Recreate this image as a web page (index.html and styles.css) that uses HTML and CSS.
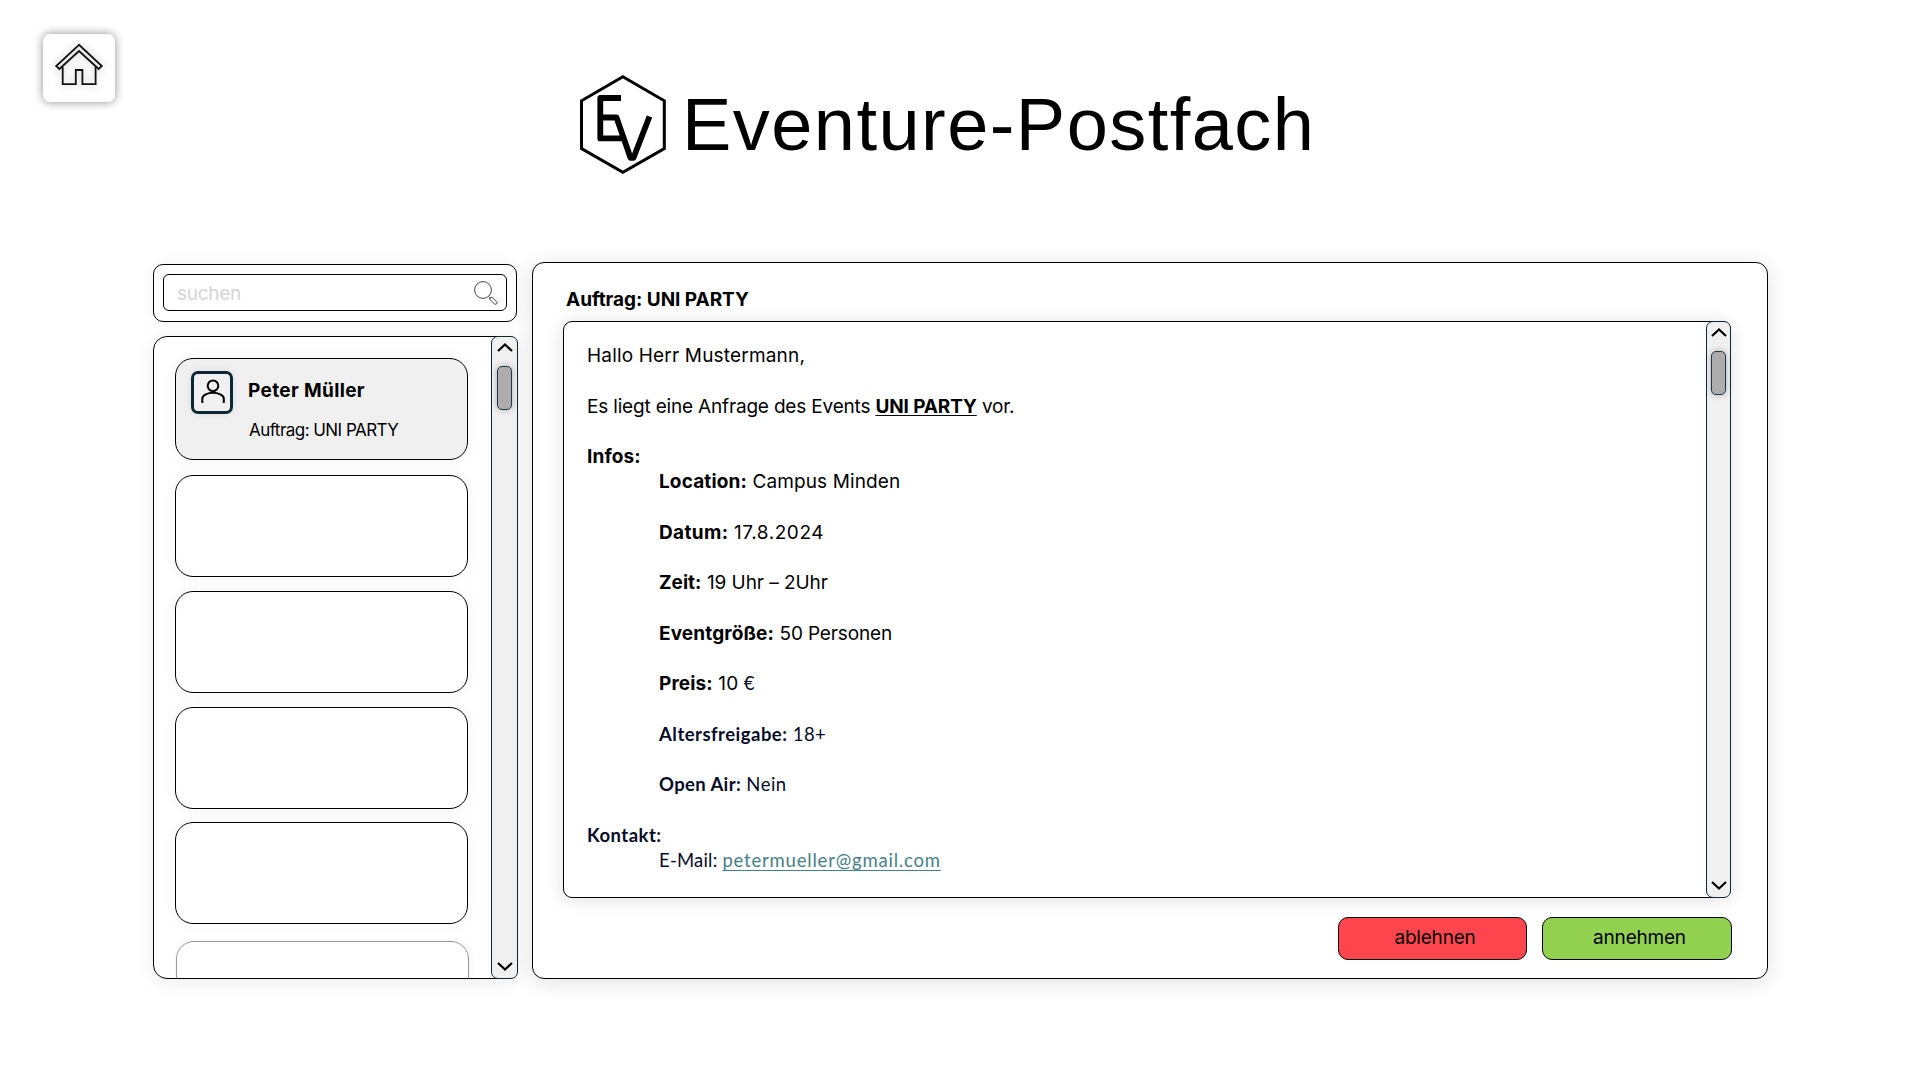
FILE: index.html
```html
<!DOCTYPE html>
<html lang="de">
<head>
<meta charset="utf-8">
<title>Eventure-Postfach</title>
<link rel="stylesheet" href="styles.css">
</head>
<body>
<header class="header">
  <a class="home" href="#" aria-label="Startseite">
    <svg class="home-icon" width="72" height="68" viewBox="0 0 72 68">
      <path d="M36 10.8 13.2 32 16.4 35 36 17 55.6 35 58.8 32Z"/>
      <path d="M19.7 33V50.2H32.8V36H39.4V50.2H52.6V33"/>
    </svg>
  </a>
  <div class="brand">
    <svg class="logo" width="88" height="102" viewBox="0 0 88 102">
      <path class="logo-frame" d="M43.900 2.800 85.300 26.800V74.600L43.900 98.200 2.500 74.600V26.800Z"/>
      <path class="logo-mark" d="M42 24H21.300V64.400H43.500"/>
      <path class="logo-mark" d="M21.300 43.500H37.500L51.500 83.800H54.500L70.500 42.500"/>
    </svg>
    <h1 class="title">Eventure-Postfach</h1>
  </div>
</header>

<main class="mailbox">
  <aside class="sidebar">
    <div class="search">
      <div class="search-field">
        <span class="search-hint">suchen</span>
        <svg class="search-icon" width="26" height="26" viewBox="0 0 26 26">
          <circle cx="10" cy="10" r="8.400"/>
          <path d="M15.700 16.600 17.600 18.500"/>
          <path d="M16.300 18.800Q18.300 16 20 18L24 22.300Q24.500 24.500 21.700 24.300Z"/>
        </svg>
      </div>
    </div>
    <div class="list">
      <div class="cards">
        <article class="card card-active">
          <div class="avatar">
            <svg width="36" height="37" viewBox="0 0 36 37">
              <circle cx="19" cy="11.800" r="5.300"/>
              <path d="M8.300 29V24.500C8.300 21 14 18.700 19 18.700S29.800 21 29.800 24.500V29"/>
            </svg>
          </div>
          <div class="card-text">
            <strong class="sender">Peter Müller</strong>
            <span class="subject">Auftrag: UNI PARTY</span>
          </div>
        </article>
        <article class="card"></article>
        <article class="card"></article>
        <article class="card"></article>
        <article class="card"></article>
        <div class="card-clip"><article class="card card-faded"></article></div>
      </div>
      <div class="scrollbar">
        <svg width="18" height="11" viewBox="0 0 18 11"><path d="M2 9 9 2.500 16 9"/></svg>
        <div class="thumb"></div>
        <svg class="down" width="18" height="11" viewBox="0 0 18 11"><path d="M2 2 9 8.500 16 2"/></svg>
      </div>
    </div>
  </aside>

  <section class="reader">
    <h2 class="reader-title">Auftrag: UNI PARTY</h2>
    <div class="message">
      <div class="message-body">
        <p class="greeting">Hallo Herr Mustermann,</p>
        <p class="gap request">Es liegt eine Anfrage des Events <strong class="event">UNI PARTY</strong> vor.</p>
        <p class="gap"><strong>Infos:</strong></p>
        <p class="indent"><strong>Location:</strong> Campus Minden</p>
        <p class="indent gap"><strong class="wider">Datum:</strong> <span class="date">17.8.2024</span></p>
        <p class="indent gap"><strong class="tight">Zeit:</strong> <span class="time">19 Uhr – 2Uhr</span></p>
        <p class="indent gap"><strong>Eventgröße:</strong> <span class="people">50 Personen</span></p>
        <p class="indent gap"><strong>Preis:</strong> 10 <span class="euro">€</span></p>
        <p class="indent gap alt"><strong>Altersfreigabe:</strong> 18+</p>
        <p class="indent gap alt"><strong class="tight">Open Air:</strong> Nein</p>
        <p class="gap alt"><strong>Kontakt:</strong></p>
        <p class="indent alt contact">E-Mail: <a class="mail" href="#">petermueller@gmail.com</a></p>
      </div>
      <div class="scrollbar scrollbar-message">
        <svg width="18" height="11" viewBox="0 0 18 11"><path d="M2 9 9 2.500 16 9"/></svg>
        <div class="thumb"></div>
        <svg class="down" width="18" height="11" viewBox="0 0 18 11"><path d="M2 2 9 8.500 16 2"/></svg>
      </div>
    </div>
    <div class="actions">
      <button class="button decline">ablehnen</button>
      <button class="button accept">annehmen</button>
    </div>
  </section>
</main>
</body>
</html>
```
FILE: styles.css
```css
* { box-sizing: border-box; }

body {
  margin: 0;
  width: 1920px;
  height: 1080px;
  overflow: hidden;
  background: #fff;
  color: #000;
  font: 400 19px/25.25px Inter, "Liberation Sans", sans-serif;
}

h1, h2, p { margin: 0; font-weight: 400; }
svg { display: block; fill: none; stroke: #000; flex: none; }

/* Header */
.header {
  display: flex;
  align-items: flex-start;
  height: 262px;
  padding: 34px 0 0 43px;
}
.home {
  width: 72px;
  height: 68px;
  border-radius: 7px;
  background: #fff;
  box-shadow: 0 0 10px rgba(0, 0, 0, .45);
}
.home-icon {
  stroke: #111;
  stroke-width: 1.8;
  filter: drop-shadow(0 0 4px rgba(0, 0, 0, .25));
}
.brand { display: flex; margin: 40px 0 0 464px; }
.logo-frame { stroke-width: 3; }
.logo-mark { stroke-width: 5.8; stroke-linejoin: round; stroke-linecap: butt; }
.title {
  margin: 14px 0 0 15px;
  font: 400 74px/74px "Liberation Sans", Arial, sans-serif;
  letter-spacing: 1.45px;
  white-space: nowrap;
}

/* Columns */
.mailbox {
  display: flex;
  align-items: flex-start;
  gap: 15px;
  padding-left: 153px;
}
.sidebar { width: 364px; padding-top: 2px; }

.search {
  height: 58px;
  padding: 9px;
  border: 1px solid #000;
  border-radius: 10px;
  box-shadow: 0 0 18px rgba(0, 0, 0, .05);
}
.search-field {
  display: flex;
  justify-content: space-between;
  height: 37px;
  padding: 5px 7px 0 13px;
  border: 1px solid #000;
  border-radius: 6px;
}
.search-hint { padding-top: 1px; color: #d5d5d5; letter-spacing: -.3px; }
.search-icon { stroke: #333; stroke-width: .9; }

.list {
  display: flex;
  height: 643px;
  margin-top: 14px;
  border: 1px solid #000;
  border-radius: 14px 8px 8px 14px;
  box-shadow: 0 3px 20px rgba(0, 0, 0, .08);
}
.cards {
  display: flex;
  flex: none;
  flex-direction: column;
  gap: 13.800px;
  width: 337px;
  padding: 21px 0 0 21px;
  overflow: hidden;
}
.card {
  flex: none;
  width: 293px;
  height: 102px;
  border: 1px solid #000;
  border-radius: 18px;
  background: #fff;
  box-shadow: 0 0 16px rgba(0, 0, 0, .05);
}
.card-active {
  display: flex;
  margin-bottom: 1.200px;
  padding: 12px 0 0 15px;
  background: #f0f0f0;
}
.avatar {
  width: 42px;
  height: 43px;
  border: 3px solid #0b2636;
  border-radius: 7px;
  box-shadow: 0 0 8px rgba(0, 0, 0, .08);
}
.avatar svg { stroke-width: 2; }
.card-text { display: flex; flex-direction: column; padding: 7px 0 0 15px; }
.sender { letter-spacing: .35px; }
.subject { margin: 15px 0 0 1px; font-size: 17px; letter-spacing: -.54px; }
.card-clip {
  flex: none;
  width: 298px;
  height: 42px;
  margin-top: 1px;
  padding: 2px 0 0 1px;
  overflow: hidden;
}
.card-faded { border-color: #999; }

/* Scrollbars */
.scrollbar {
  display: flex;
  flex: none;
  flex-direction: column;
  align-items: center;
  width: 27px;
  margin: -1px 0;
  padding: 5px 0 6px;
  border: 1px solid #0b2636;
  border-radius: 7px;
  background: #f0f0f0;
}
.scrollbar svg { stroke-width: 2.2; }
.thumb {
  width: 15px;
  height: 44px;
  margin-top: 13px;
  border: 1px solid #1c3a4c;
  border-radius: 5px;
  background: #adadad;
  box-shadow: 0 0 6px rgba(0, 0, 0, .28);
}
.down { margin-top: auto; }

/* Message reader */
.reader {
  width: 1236px;
  height: 717px;
  padding-left: 30px;
  border: 1px solid #000;
  border-radius: 12px;
  background: #fff;
  box-shadow: 0 3px 22px rgba(0, 0, 0, .12);
}
.reader-title {
  padding: 25px 0 0 3px;
  font-size: 19px;
  font-weight: 700;
  line-height: 24px;
  letter-spacing: -.04px;
}
.message {
  display: flex;
  justify-content: space-between;
  width: 1168px;
  height: 577px;
  margin-top: 9px;
  border: 1px solid #000;
  border-radius: 9px;
  box-shadow: 0 2px 18px rgba(0, 0, 0, .12);
}
.message-body { padding: 21px 0 0 23px; white-space: nowrap; }
.message-body p { letter-spacing: .13px; }
.message-body .greeting { letter-spacing: .18px; }
.gap { margin-top: 25.250px; }
.message-body .gap { margin-top: 25.250px; }
.indent { padding-left: 72px; }
.message-body .request { letter-spacing: -.18px; }
.event { text-decoration: underline; text-decoration-thickness: 1px; text-underline-offset: 2px; letter-spacing: -.12px; }
.wider { letter-spacing: .38px; }
.date { letter-spacing: .55px; }
.time { letter-spacing: -.05px; }
.tight { letter-spacing: 0; }
.people { letter-spacing: -.15px; }
.alt, .euro { color: #060c28; font-family: Lato, Carlito, sans-serif; font-size: 18.500px; }
.message-body .alt { letter-spacing: .48px; }
.message-body .alt .tight { letter-spacing: .38px; }
.message-body .contact { letter-spacing: .2px; }
.mail { color: #467f8a; letter-spacing: .8px; text-decoration-thickness: 1px; text-underline-offset: 3px; }

.scrollbar-message { width: 25px; margin-right: -1px; }

.actions {
  display: flex;
  gap: 15px;
  padding: 19px 0 0 775px;
}
.button {
  width: 189px;
  height: 43px;
  padding: 0 0 1px 5px;
  border: 1px solid #000;
  border-radius: 10px;
  color: #000;
  font: inherit;
  letter-spacing: -.2px;
}
.decline { background: #ff464e; }
.accept { width: 190px; background: #92d050; }
```
